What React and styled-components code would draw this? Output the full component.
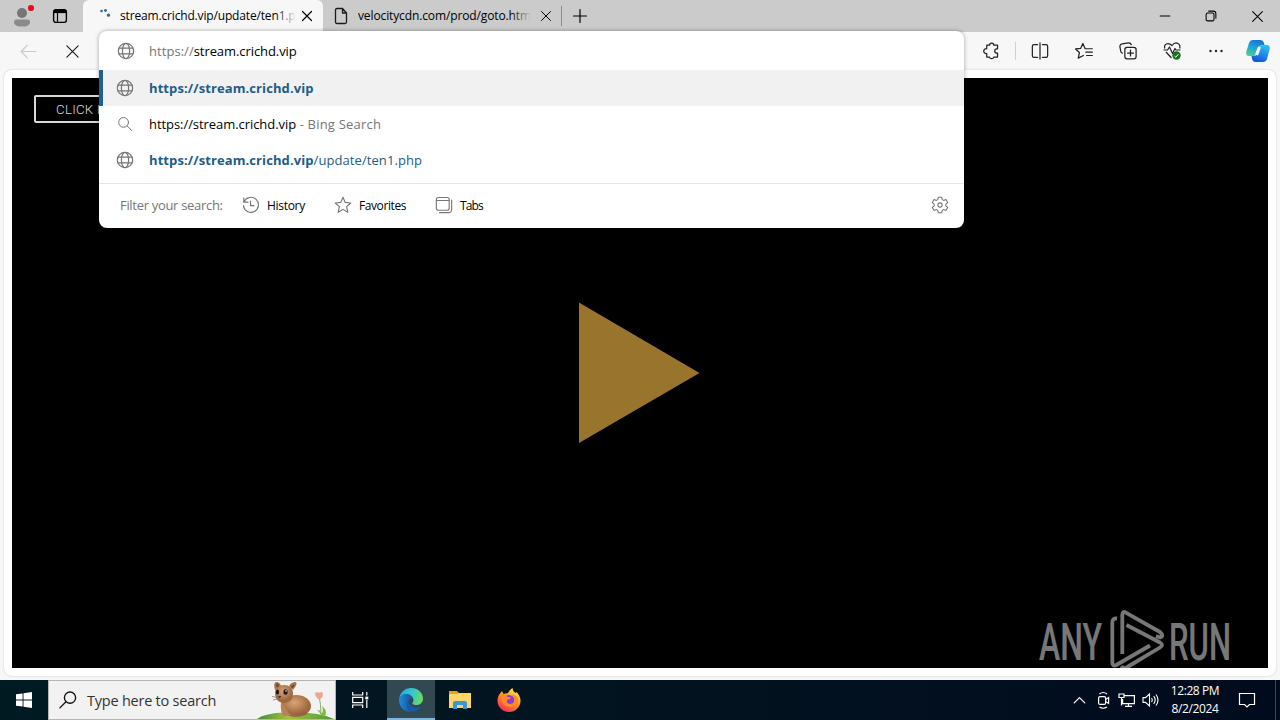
import styled, { createGlobalStyle } from 'styled-components'

const GlobalStyle = createGlobalStyle`
  * {
    box-sizing: border-box;
  }
  body {
    margin: 0;
    font-family: "Open Sans", "Noto Sans", sans-serif;
    overflow: hidden;
  }
  svg {
    display: block;
    flex: none;
  }
`;

const Line = ({ size = 16, width = 1.1, children, ...rest }) => (
  <svg width={size} height={size} viewBox="0 0 16 16" fill="none" stroke="currentColor"
    strokeWidth={width} strokeLinecap="round" strokeLinejoin="round" {...rest}>
    {children}
  </svg>
);

const GlobeIcon = () => (
  <Line size={18} width={1.1}>
    <circle cx="8" cy="8" r="6.8" />
    <ellipse cx="8" cy="8" rx="3.2" ry="6.8" />
    <path d="M1.8 5.4h12.4M1.8 10.6h12.4" />
  </Line>
);

const SearchIcon = () => (
  <Line size={16} width={1}>
    <circle cx="6.6" cy="6.4" r="4.9" />
    <path d="M10.2 10l4.6 4.6" />
  </Line>
);

const HistoryIcon = () => (
  <Line size={18} width={1}>
    <path d="M1.6 1.6v3.8h3.8M1.8 5.2A6.7 6.7 0 1 1 1.3 8.6M7.6 4.6v4h3" />
  </Line>
);

const StarIcon = () => (
  <Line size={18} width={1}>
    <path d="M8 1.2l2 4.5 4.9.5-3.7 3.3 1.1 4.9L8 11.9l-4.3 2.5 1.1-4.9L1.1 6.2 6 5.7z" />
  </Line>
);

const TabsIcon = () => (
  <Line size={18} width={1}>
    <rect x="1.2" y="1.3" width="11.4" height="11.4" rx="1.8" />
    <path d="M1.2 4h11.4M14.8 3.6v8.6a2.6 2.6 0 0 1-2.6 2.6H4" />
  </Line>
);

const GearIcon = () => (
  <Line size={18} width={0.95}>
    <circle cx="8" cy="8" r="1.9" />
    <path d="M6.5 1.1h3l.5 2.1 1.2.7 2.1-.7 1.5 2.6-1.6 1.5v1.4l1.6 1.5-1.5 2.6-2.1-.7-1.2.7-.5 2.1h-3L6 12.8l-1.2-.7-2.1.7-1.5-2.6 1.6-1.5V7.3L1.2 5.8l1.5-2.6 2.1.7L6 3.2z" />
  </Line>
);

const CloseIcon = ({ size = 12, width = 1.6 }) => (
  <Line size={size} width={width}>
    <path d="M2 2l12 12M14 2L2 14" />
  </Line>
);

const Spinner = () => (
  <svg width="18" height="18" fill="#24679b">
    <circle cx="4.5" cy="4" r="1.3" />
    <circle cx="8.5" cy="3.5" r="1.4" />
    <circle cx="11.5" cy="8.2" r="1.6" />
  </svg>
);

const Avatar = () => (
  <svg width="26" height="26" viewBox="0 0 26 26">
    <circle cx="13" cy="10" r="5" fill="#767676" />
    <path d="M5 19q0-2.400 2.400-2.400h11.200q2.400 0 2.400 2.400c0 3.600-4 4.600-8 4.600s-8-1-8-4.600z" fill="#8b8b8b" />
    <circle cx="22" cy="5" r="3.1" fill="#e3121c" />
  </svg>
);

const WorkspaceIcon = () => (
  <svg width="16" height="16" fill="none" stroke="#000">
    <rect x="1.6" y="1.6" width="12.8" height="12.8" rx="2.3" strokeWidth="1.4" />
    <path d="M2 3.5h12" strokeWidth="3.2" />
    <path d="M5.5 4v10" strokeWidth="1.2" />
  </svg>
);

const PageIcon = () => (
  <svg width="16" height="18" fill="none" stroke="#1b1b1b" strokeWidth="1.3" strokeLinejoin="round">
    <path d="M2.5 3q0-1.500 1.500-1.500h5.500l4 4.500v9q0 1.500-1.500 1.500H4q-1.500 0-1.500-1.500zM9.500 1.500V6h4" />
  </svg>
);

const PuzzleIcon = () => (
  <Line size={18}>
    <path d="M4.200 2.800h2.500a1.900 1.900 0 0 1 3.800 0h3.300v3.400h-.7a1.800 1.800 0 0 0 0 3.600h.7v3.600h-3.400a1.900 1.900 0 0 1-3.700 0H4.200V10.300a2.200 2.200 0 1 1 0-4.300z" />
  </Line>
);

const SplitIcon = () => (
  <Line size={18}>
    <path d="M5.800 2.400H2.600Q1.200 2.400 1.200 3.800v8.400q0 1.400 1.400 1.400h3.200M8 .8v14.400M10.200 2.400h3.200q1.400 0 1.400 1.400v8.400q0 1.400-1.400 1.400h-3.200" />
  </Line>
);

const FavoritesIcon = () => (
  <Line size={18}>
    <path d="M11 6H9L7 1.300 5 5.700l-4.500.5 3.400 3.200-1 4.900L7.500 12M10.500 6h4.900M9.600 9h5.800M10.300 12h5.100" />
  </Line>
);

const CollectionsIcon = () => (
  <Line size={18}>
    <path d="M3 9.900A2.300 2.300 0 0 1 1.500 8L.8 4.200a2.300 2.300 0 0 1 1.900-2.500L8.400.7q1.900-.2 2.500 1.700" />
    <rect x="5.200" y="4.700" width="10" height="10.200" rx="2" />
    <path d="M10.200 7.200v5.200M7.600 9.800h5.200" />
  </Line>
);

const HeartIcon = () => (
  <svg width="20" height="20" viewBox="0 0 20 20" fill="none" stroke="#222" strokeWidth="1.2" strokeLinejoin="round">
    <path d="M2.800 7.500C1.500 3 6 .8 10 4.500 14-.5 19 3 17.700 7.500M4 11l5.500 6" />
    <path d="M1.500 9h4L7.500 6l3 6.500 2.500-5 1 1.500h4.500" />
    <circle cx="14.500" cy="14.500" r="4.200" fill="#18711d" stroke="none" />
    <path d="M12.600 15.200l1.200 1 2.600-3" stroke="#fff" strokeWidth="1" />
  </svg>
);

const CopilotIcon = () => (
  <svg width="26" height="24" viewBox="0 0 26 24">
    <defs>
      <linearGradient id="copA" x1=".6" y1="0" x2=".2" y2="1">
        <stop offset="0" stopColor="#1673d6" />
        <stop offset=".5" stopColor="#20a6d8" />
        <stop offset="1" stopColor="#4fd08d" />
      </linearGradient>
      <linearGradient id="copB" x1=".7" y1="0" x2=".3" y2="1">
        <stop offset="0" stopColor="#2bc1ef" />
        <stop offset=".5" stopColor="#2489eb" />
        <stop offset="1" stopColor="#1554cf" />
      </linearGradient>
    </defs>
    <path d="M8 1h7.500q2.600 0 3.300 2.500L19.500 6h-2.300q-2.600 0-3.400 2.500l-2.100 6.200Q10.800 17 8.300 17H4.200Q.3 17 1.400 12.500L4 4Q5 1 8 1z" fill="url(#copA)" />
    <path d="M18 23h-7.500q-2.600 0-3.300-2.500L6.500 17h2.300q2.600 0 3.400-2.500l2.100-6Q15.200 6 17.700 6h4.100q3.900 0 2.800 4.500L22 20q-1 3-4 3z" fill="url(#copB)" />
    <path d="M14.500 8L11.500 16" stroke="#f7f7f7" strokeWidth="3.2" />
  </svg>
);

const PlayLogo = () => (
  <svg width="194" height="62" viewBox="0 0 194 62" fill="none" opacity=".5">
    <g fill="#eee" fontFamily="Roboto, sans-serif" fontWeight="500" fontSize="51.500">
      <text x="1" y="50" textLength="63" lengthAdjust="spacingAndGlyphs">ANY</text>
      <text x="131" y="50" textLength="62" lengthAdjust="spacingAndGlyphs">RUN</text>
    </g>
    <path
      d="M79 8.500q-4.700-.5-4.700 4V52q0 5 4 3l33.700-19.500M84.300 44V5q0-4.500 4-2.200L122 22q4.500 4 0 5.500L118 26M88.500 15l33.500 17.500q4 2.500 0 5L91 56q-5 4.500-7.500 0"
      stroke="#eee" strokeWidth="3.800" strokeLinejoin="round" />
  </svg>
);

const WindowsLogo = () => (
  <svg width="16" height="16" fill="#fff">
    <path d="M0 2.300l6.600-.9v6.100H0zM7.500 1.300L16 .1v7.400H7.500zM0 8.400h6.600v6.200L0 13.700zM7.500 8.400H16v7.500l-8.500-1.200z" />
  </svg>
);

const Quokka = () => (
  <svg width="78" height="38" viewBox="0 0 78 38">
    <defs>
      <linearGradient id="grass" x1="0" x2="1">
        <stop offset="0" stopColor="#3f8d3c" />
        <stop offset=".4" stopColor="#a5c13b" />
        <stop offset="1" stopColor="#4c9b35" />
      </linearGradient>
      <radialGradient id="fur" cx=".45" cy=".35">
        <stop offset="0" stopColor="#d9a578" />
        <stop offset="1" stopColor="#9c683d" />
      </radialGradient>
    </defs>
    <path d="M0 38q8-6 28-6.500Q60 30 77 38z" fill="url(#grass)" />
    <path d="M64 34q-2-4-4-5 4 0 4.500 4Q67 30 65 25q6 5 3 10z" fill="#7eb848" />
    <path d="M64 33q0-10-2-18" stroke="#87ad61" fill="none" />
    <path d="M58 12l3-1 1 1 2-1 2 1-.5 4-2 2h-2.500l-2.500-3z" fill="#f0a58d" />
    <ellipse cx="39" cy="25" rx="15" ry="11" fill="url(#fur)" />
    <path d="M24 20q-1 13 3 15l8-1q-3-1-4-3z" fill="#b98255" />
    <path d="M37 33q4 2 12 1l1-3z" fill="#97613a" />
    <path d="M18 9q-2-7 1-8 4 0 5 4zM32 5q2-4 7-4 2 2-3 8z" fill="#a87349" />
    <path d="M19.500 6.500q-1-4 .5-4 2 0 2 3zM34 5.500q1-2 3.500-2 0 2-3 4z" fill="#75492f" />
    <path d="M18 11q1-7 9-7t9 8q0 9-8 10-10 0-10-11z" fill="url(#fur)" />
    <ellipse cx="20.500" cy="11" rx="1.600" ry="2.500" fill="#1f1619" />
    <ellipse cx="28.500" cy="11" rx="2.100" ry="2.800" fill="#1f1619" />
    <circle cx="29" cy="10" r=".8" fill="#fff" />
    <path d="M20.500 15h4l-2 2.500z" fill="#5b382a" />
    <path d="M20 16.500l-5-1M20 18l-4 1" stroke="#7d6671" strokeWidth=".7" />
  </svg>
);

const TaskViewIcon = () => (
  <svg width="17" height="16" fill="none" stroke="#fff" strokeWidth="1.2">
    <path d="M.7 0v3h10V0M.7 16v-3h10v3M.7 5.300h10v5.400H.7z" />
    <path d="M14.800 0v3.500M14.800 8v8" />
    <path d="M13.300 6h3" strokeWidth="2.8" />
  </svg>
);

const EdgeIcon = () => (
  <svg width="24" height="24" viewBox="0 0 24 24">
    <defs>
      <linearGradient id="edgeTop" x1="0" x2="1" y1=".2" y2=".4">
        <stop offset="0" stopColor="#2aa9df" />
        <stop offset=".55" stopColor="#37c6cc" />
        <stop offset="1" stopColor="#69dc5c" />
      </linearGradient>
      <linearGradient id="edgeBottom" x1="0" x2="1">
        <stop offset="0" stopColor="#1c8bd9" />
        <stop offset="1" stopColor="#174e9d" />
      </linearGradient>
    </defs>
    <path d="M.3 11C1 4 6 0 12 0c7 0 12 5 12 10.500 0 4-3 6.500-6.500 6.500-3.500 0-5-1.300-3.500-3 1.600-2.600-.7-6-4.200-6C5 8 1 11 .3 14z" fill="url(#edgeTop)" />
    <path d="M.3 11C1 7 5 5.500 8.500 6c3 .4 5 2.500 5.500 4.500-6-1.500-8 9-1 13.300C5 24.500-.8 18 .3 11z" fill="url(#edgeBottom)" />
    <path d="M10 10.500C5 15 8 23 14 23.800c3.500-.4 6.500-2.300 8.300-5.300-6.500 3-14 0-12.300-8z" fill="#185aa9" />
  </svg>
);

const FolderIcon = () => (
  <svg width="22" height="20" viewBox="0 0 22 20">
    <path d="M0 1h8l2 2h11v5H0z" fill="#e9a11c" />
    <path d="M0 4h8l2-1h12v15H0z" fill="#fcd667" />
    <path d="M4 19v-6q0-2 2-2h10q2 0 2 2v6h-4v-4H8v4z" fill="#3794df" />
  </svg>
);

const FirefoxIcon = () => (
  <svg width="24" height="24" viewBox="0 0 24 24">
    <defs>
      <linearGradient id="fox" x1=".8" y1="0" x2=".2" y2="1">
        <stop offset="0" stopColor="#fff04a" />
        <stop offset=".45" stopColor="#ff9722" />
        <stop offset="1" stopColor="#f5225f" />
      </linearGradient>
    </defs>
    <path d="M5 3l1.500 3q2-1 4.500-.8Q12 2 15.500 0q0 3 3 5l1-1q4 4 4 9A11.500 11 0 0 1 .5 13Q.5 8 3 5.500z" fill="url(#fox)" />
    <circle cx="12" cy="12.500" r="5.500" fill="#8b3ddb" />
    <path d="M4 8q4-1.500 7 1l3 .5q-1 2-3.500 2-1.500 2 .5 4 4 1.500 6-1.500 1.500-5-2.500-7.500 6 .5 6.500 6-1 6-8.500 6.500-8.500-.5-8.500-11z" fill="#ff8a27" />
  </svg>
);

const TrayVideoIcon = () => (
  <svg width="16" height="18" fill="none" stroke="#fff" strokeWidth="1.2">
    <rect x="3.600" y="5.600" width="7" height="7.800" rx="1.500" />
    <path d="M10.600 8.500l3-2v6l-3-2M4.500 3q3.500-3 7.500 0M4.500 16q3.500 2.500 7.500 0" />
  </svg>
);

const NetworkIcon = () => (
  <svg width="18" height="16" fill="none" stroke="#fff" strokeWidth="1.2">
    <path d="M6 3.600h10.400v8H4.600V7M1 2h5v3.500H1zM3.500 5.500v8M10.500 11.600v3M7 14.400h7" />
  </svg>
);

const VolumeIcon = () => (
  <svg width="18" height="16" fill="none" stroke="#fff" strokeWidth="1.1">
    <path d="M1 5.600h2.500L7.500 2v12l-4-3.600H1zM9.500 6q1.500 2 0 4M11.700 4.200q3 3.800 0 7.600M14 2.500q4 5.500 0 11" />
  </svg>
);

const toolbarIcons = [
  { name: 'split', icon: <SplitIcon /> },
  { name: 'favorites', icon: <FavoritesIcon /> },
  { name: 'collections', icon: <CollectionsIcon /> },
  { name: 'essentials', icon: <HeartIcon /> },
];

const filters = [
  { name: 'History', icon: <HistoryIcon />, space: -0.3 },
  { name: 'Favorites', icon: <StarIcon />, space: -0.4 },
  { name: 'Tabs', icon: <TabsIcon />, space: -0.9 },
];

const App = () => {
  return <>
    <GlobalStyle />
    <Desktop>
      <TabStrip>
        <ProfileArea>
          <Avatar />
          <WorkspaceIcon />
        </ProfileArea>
        <Tab $active>
          <Spinner />
          <TabTitle $fade="#f7f7f7" $space={-0.16}>stream.crichd.vip/update/ten1.php</TabTitle>
          <CloseIcon />
        </Tab>
        <Tab>
          <PageIcon />
          <TabTitle $fade="#cbcbcb" $space={-0.12}>velocitycdn.com/prod/goto.html</TabTitle>
          <CloseIcon width={1.3} />
        </Tab>
        <NewTab>
          <Line size={16} width={1.2}><path d="M8 1.500v13M1.500 8h13" /></Line>
        </NewTab>
        <WindowButtons>
          <WindowButton>
            <Line size={12} width={1.4}><path d="M1.500 8h13" /></Line>
          </WindowButton>
          <WindowButton>
            <Line size={12} width={1.4}>
              <rect x="1.500" y="4" width="10.500" height="10.500" rx="2" />
              <path d="M5 1.500h6q3.500 0 3.500 3.500v6" />
            </Line>
          </WindowButton>
          <WindowButton><CloseIcon size={13} width={1.3} /></WindowButton>
        </WindowButtons>
      </TabStrip>

      <Toolbar>
        <NavButton $muted>
          <Line size={17}><path d="M15 8H1M7 2L1 8l6 6" /></Line>
        </NavButton>
        <NavButton><CloseIcon size={15} width={1.2} /></NavButton>
        <ToolbarRight>
          <ToolButton><PuzzleIcon /></ToolButton>
          <Divider />
          {toolbarIcons.map((item) => (
            <ToolButton key={item.name}>{item.icon}</ToolButton>
          ))}
          <ToolButton>
            <svg width="16" height="4" fill="#222">
              <circle cx="2.500" cy="2" r="1.200" />
              <circle cx="8" cy="2" r="1.200" />
              <circle cx="13.500" cy="2" r="1.200" />
            </svg>
          </ToolButton>
          <CopilotButton><CopilotIcon /></CopilotButton>
        </ToolbarRight>
      </Toolbar>

      <PageFrame>
        <Page>
          <AdButton>CLICK HERE</AdButton>
          <PlayShape>
            <svg width="122" height="142">
              <path d="M1 .5L121.500 71 1 141z" fill="#98742c" />
            </svg>
          </PlayShape>
          <Watermark><PlayLogo /></Watermark>
        </Page>
      </PageFrame>

      <Omnibox>
        <AddressRow>
          <GlobeIcon />
          <Text $space={-0.08}><Muted $space={0.05}>https://</Muted>stream.crichd.vip</Text>
        </AddressRow>
        <Suggestion $selected>
          <GlobeIcon />
          <Text $link><b>https://stream.crichd.vip</b></Text>
        </Suggestion>
        <Suggestion>
          <SearchIcon />
          <Text $space={-0.06}>https://stream.crichd.vip<Muted $space={0.2}> - Bing Search</Muted></Text>
        </Suggestion>
        <Suggestion>
          <GlobeIcon />
          <Text $link $space={0.08}><b>https://stream.crichd.vip</b>/update/ten1.php</Text>
        </Suggestion>
        <FilterBar>
          <FilterLabel>Filter your search:</FilterLabel>
          {filters.map((f) => (
            <Filter key={f.name} $space={f.space}>
              {f.icon}
              <span>{f.name}</span>
            </Filter>
          ))}
          <Settings><GearIcon /></Settings>
        </FilterBar>
      </Omnibox>

      <Taskbar>
        <StartButton><WindowsLogo /></StartButton>
        <SearchBox>
          <Line size={18} width={1.2}>
            <circle cx="9.800" cy="5.900" r="5" />
            <path d="M6.200 9.500L.8 15" />
          </Line>
          <span>Type here to search</span>
          <Quokka />
        </SearchBox>
        <TaskButton><TaskViewIcon /></TaskButton>
        <Apps>
          <TaskButton $active><EdgeIcon /></TaskButton>
          <TaskButton><FolderIcon /></TaskButton>
          <TaskButton><FirefoxIcon /></TaskButton>
        </Apps>
        <Tray>
          <TrayIcon><Line size={13} width={1.5}><path d="M1.500 11L8 4.500l6.500 6.500" /></Line></TrayIcon>
          <TrayIcon><TrayVideoIcon /></TrayIcon>
          <TrayIcon><NetworkIcon /></TrayIcon>
          <TrayIcon><VolumeIcon /></TrayIcon>
          <Clock>
            <span>12:28 PM</span>
            <span>8/2/2024</span>
          </Clock>
          <Notifications>
            <svg width="18" height="18" fill="none" stroke="#fff" strokeWidth="1.2">
              <path d="M1.500 2.500h15v11h-5L9 16l-2.500-2.500h-5z" />
            </svg>
          </Notifications>
        </Tray>
      </Taskbar>
    </Desktop>
  </>
};

export default App;


const Desktop = styled.div`
  position: relative;
  width: 1280px;
  height: 720px;
  display: flex;
  flex-direction: column;
  background: #f7f7f7;
  overflow: hidden;
`;

const TabStrip = styled.header`
  height: 32px;
  display: flex;
  background: #cbcbcb;
`;

const ProfileArea = styled.div`
  width: 83px;
  display: flex;
  align-items: center;
  gap: 17px;
  padding-left: 9px;
`;

const Tab = styled.div`
  width: ${({ $active }) => ($active ? '240px' : '239px')};
  display: flex;
  align-items: center;
  padding: 0 10px 0 ${({ $active }) => ($active ? '14px' : '10px')};
  gap: ${({ $active }) => ($active ? '5px' : '9px')};
  background: ${({ $active }) => ($active ? '#f7f7f7' : 'transparent')};
  border-right: ${({ $active }) => ($active ? 'none' : '1px solid #8a8a8a')};
  border-radius: ${({ $active }) => ($active ? '6px 6px 0 0' : '0')};
  ${({ $active }) => !$active && 'height: 20px; margin-top: 6px; padding-right: 9px;'}
`;

const TabTitle = styled.span`
  position: relative;
  flex: 1;
  overflow: hidden;
  white-space: nowrap;
  font-size: 12px;
  line-height: 18px;
  letter-spacing: ${({ $space }) => $space}px;
  color: #000;
  &::after {
    content: "";
    position: absolute;
    right: 0;
    top: 0;
    width: 20px;
    height: 100%;
    background: linear-gradient(90deg, transparent, ${({ $fade }) => $fade});
  }
`;

const NewTab = styled.div`
  width: 35px;
  display: flex;
  align-items: center;
  justify-content: center;
`;

const WindowButtons = styled.div`
  display: flex;
  margin-left: auto;
`;

const WindowButton = styled.div`
  width: 46px;
  display: flex;
  align-items: center;
  justify-content: center;
`;

const Toolbar = styled.div`
  height: 38px;
  display: flex;
  align-items: center;
  padding-left: 6px;
`;

const NavButton = styled.div`
  width: 44px;
  display: flex;
  justify-content: center;
  color: ${({ $muted }) => ($muted ? '#c9c9c9' : '#1b1b1b')};
`;

const ToolbarRight = styled.div`
  display: flex;
  align-items: center;
  margin-left: auto;
`;

const ToolButton = styled.div`
  width: 44px;
  display: flex;
  justify-content: center;
  color: #222;
`;

const CopilotButton = styled(ToolButton)`
  width: 42px;
  padding-right: 3px;
`;

const Divider = styled.div`
  width: 1px;
  height: 18px;
  margin: 0 2px;
  background: #d0d0d0;
`;

const PageFrame = styled.main`
  flex: 1;
  display: flex;
  margin: 0 4px 4px;
  padding: 8px;
  background: #fff;
  border-radius: 8px;
  box-shadow: 0 0 2px rgba(0, 0, 0, 0.22);
`;

const Page = styled.div`
  flex: 1;
  display: grid;
  grid-template-rows: 224px 142px 1fr;
  background: #000;
`;

const AdButton = styled.div`
  width: 130px;
  height: 28px;
  margin: 17px 0 0 22px;
  padding-left: 20px;
  border: 2px solid #d8d8d8;
  border-radius: 2px;
  color: #d8d8d8;
  font: 300 13.3px/25px Roboto, sans-serif;
  letter-spacing: 0.25px;
  white-space: nowrap;
`;

const PlayShape = styled.div`
  display: flex;
  padding-left: 566px;
`;

/* the logo hangs a little below the black area */
const Watermark = styled.div`
  align-self: end;
  justify-self: end;
  margin: 0 36px -4px 0;
`;

const Omnibox = styled.div`
  position: absolute;
  left: 99px;
  top: 31px;
  width: 865px;
  height: 197px;
  display: flex;
  flex-direction: column;
  background: #fff;
  border-radius: 8px;
  box-shadow: 0 0 4px rgba(0, 0, 0, 0.35);
  overflow: hidden;
  color: #767676;
`;

const AddressRow = styled.div`
  height: 39px;
  display: flex;
  align-items: center;
  gap: 14px;
  padding-left: 18px;
`;

const Suggestion = styled.div`
  height: 36px;
  display: flex;
  align-items: center;
  padding-left: 13px;
  border-left: 4px solid ${({ $selected }) => ($selected ? '#1f6190' : 'transparent')};
  background: ${({ $selected }) => ($selected ? '#f1f1f1' : '#fff')};
  svg {
    width: 18px;
    margin-right: 15px;
  }
`;

const Text = styled.span`
  font-size: 13px;
  line-height: 20px;
  white-space: pre;
  letter-spacing: ${({ $space = 0 }) => $space}px;
  color: ${({ $link }) => ($link ? '#205d87' : '#000')};
  b {
    letter-spacing: 0.09px;
  }
`;

const Muted = styled.span`
  color: #767676;
  ${({ $space }) => $space && `letter-spacing: ${$space}px;`}
`;

const FilterBar = styled.div`
  flex: 1;
  display: flex;
  align-items: center;
  margin-top: 5px;
  border-top: 1px solid #e5e5e5;
  padding: 0 15px 2px 21px;
`;

const FilterLabel = styled.span`
  width: 122px;
  font-size: 13px;
  letter-spacing: -0.31px;
  white-space: nowrap;
`;

const Filter = styled.div`
  display: flex;
  align-items: center;
  gap: 7px;
  margin-right: 29px;
  font-size: 12px;
  letter-spacing: ${({ $space }) => $space}px;
  span {
    color: #000;
  }
`;

const Settings = styled.div`
  margin-left: auto;
`;

const Taskbar = styled.footer`
  height: 40px;
  display: flex;
  background: linear-gradient(90deg, #001a22 0%, #02141f 45%, #010b1e 100%);
`;

const StartButton = styled.div`
  width: 48px;
  display: flex;
  align-items: center;
  justify-content: center;
`;

const SearchBox = styled.div`
  width: 288px;
  display: flex;
  align-items: center;
  padding-left: 10px;
  background: #f2f2f2;
  border: 1px solid #b5b5b5;
  color: #111;
  font-size: 14.5px;
  letter-spacing: -0.23px;
  span {
    flex: 1;
    margin-left: 10px;
    white-space: nowrap;
    color: #333;
  }
`;

const TaskButton = styled.div`
  width: 48px;
  display: flex;
  align-items: center;
  justify-content: center;
  background: ${({ $active }) => ($active ? '#334951' : 'transparent')};
  box-shadow: ${({ $active }) => ($active ? 'inset 0 -2px #76b9ed' : 'none')};
`;

const Apps = styled.div`
  display: flex;
  gap: 1px;
  margin-left: 3px;
`;

const Tray = styled.div`
  display: flex;
  align-items: center;
  margin-left: auto;
  color: #fff;
`;

const TrayIcon = styled.div`
  width: 24px;
  display: flex;
  justify-content: center;
`;

const Clock = styled.div`
  width: 64px;
  display: flex;
  flex-direction: column;
  align-items: center;
  font-size: 12px;
  line-height: 18px;
  letter-spacing: -0.4px;
  white-space: nowrap;
`;

const Notifications = styled.div`
  width: 49px;
  height: 40px;
  display: flex;
  align-items: center;
  padding-left: 11px;
  margin-right: 4px;
  border-right: 1px solid #3b4656;
`;
